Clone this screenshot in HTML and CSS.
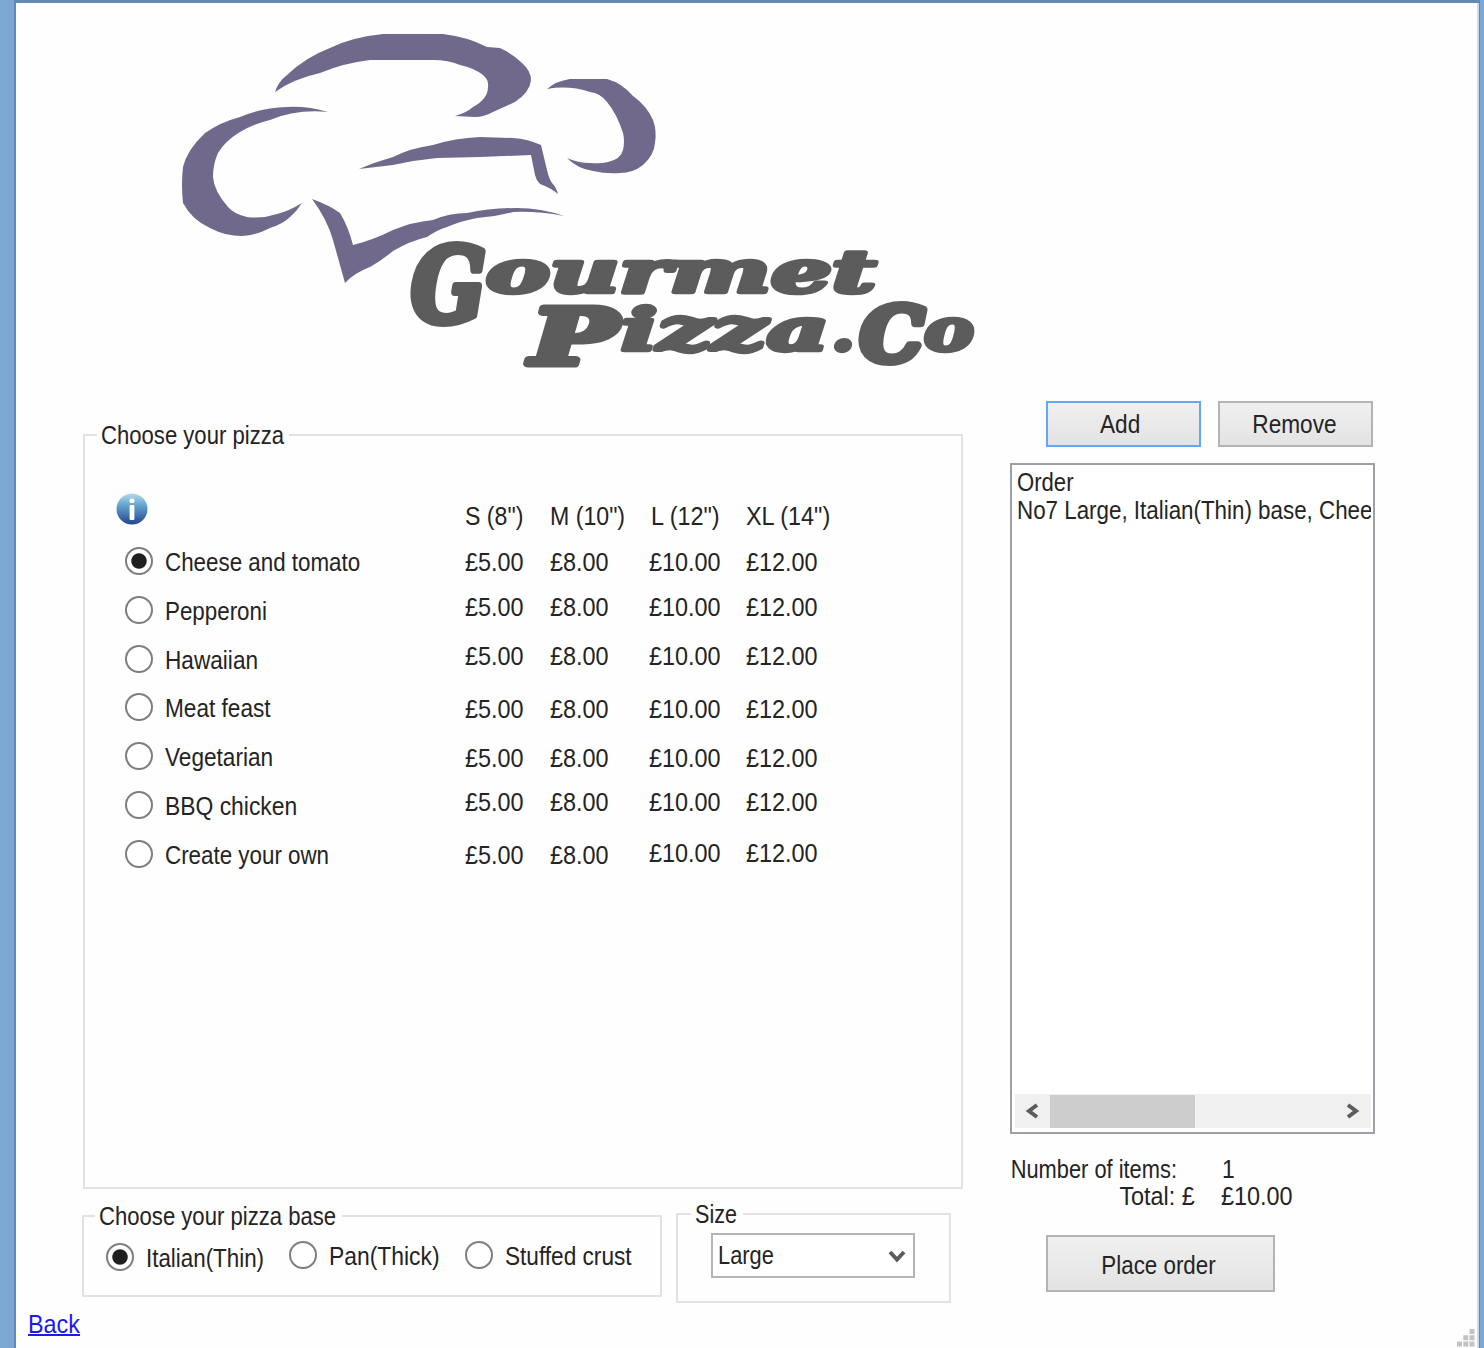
FILE: index.html
```html
<!DOCTYPE html>
<html lang="en">
<head>
<meta charset="utf-8">
<title>Gourmet Pizza.Co</title>
<link rel="stylesheet" href="styles.css">
</head>
<body>
<main class="window">
  <svg class="logo" viewBox="170 20 820 360" role="img" aria-label="Gourmet Pizza.Co">
    <g class="hat">
      <path d="M275 92Q278 82 287 75Q306 57 330 48Q352 37 383 34L443 34Q468 37 487 47L500 48Q513 54 522 63Q531 71 531 80Q530 92 515 102L493 112Q484 117 475 117L455 116Q466 113 473 107Q488 99 488 87Q489 80 483 75Q474 68 460 65Q448 60 433 60L370 60Q344 63 320 73Q293 79 275 92Z"/>
      <path d="M328 112Q308 106 287 107Q261 108 240 117Q221 122 205 133Q187 150 183 167Q181 185 183 203Q192 220 210 228Q225 236 242 236Q257 235 270 228Q283 224 290 217Q297 211 302 203Q289 211 277 214Q262 219 247 217Q234 214 228 207Q214 191 213 177Q213 164 218 153Q225 141 240 132Q253 124 270 120Q296 109 328 112Z"/>
      <path d="M547 89Q556 81 570 79L607 79Q622 83 633 96Q647 106 653 120Q657 131 655 143Q654 155 643 165Q633 173 620 173Q606 174 593 171Q578 169 567 158Q578 163 590 163Q601 164 608 162Q621 159 623 150Q625 141 623 133Q617 114 607 102Q600 93 590 92Q569 85 547 89Z"/>
      <path d="M359 169Q375 162 393 157Q411 148 433 145Q455 138 480 137L513 138Q528 139 541 145L547 170Q549 179 552 183Q556 187 558 194Q551 188 540 184Q536 180 535 175L531 155L480 157L437 158Q415 160 393 165Z"/>
      <path d="M312 199Q329 205 340 213Q348 226 353 245Q373 240 393 230Q412 222 433 220Q449 213 467 213Q491 208 517 208Q541 208 564 216Q538 211 513 212Q495 217 477 218Q461 221 447 227Q437 230 427 237Q410 241 393 251Q381 261 370 267Q354 273 345 283L333 240Q327 219 312 199Z"/>
    </g>
    <g class="brand">
      <text><tspan class="cap-g" x="411" y="322" textLength="75" lengthAdjust="spacingAndGlyphs">G</tspan><tspan class="low" x="486" y="292" textLength="390" lengthAdjust="spacingAndGlyphs">ourmet</tspan></text>
      <text><tspan class="cap-p" x="531" y="364" textLength="86" lengthAdjust="spacingAndGlyphs">P</tspan><tspan class="low" x="621" y="350" textLength="208" lengthAdjust="spacingAndGlyphs">izza</tspan><tspan class="low" x="831" y="350" textLength="24" lengthAdjust="spacingAndGlyphs">.</tspan><tspan class="cap-c" x="860" y="361" textLength="64" lengthAdjust="spacingAndGlyphs">C</tspan><tspan class="low" x="924" y="350" textLength="50" lengthAdjust="spacingAndGlyphs">o</tspan></text>
    </g>
  </svg>

  <div class="content">
    <section class="left">
      <fieldset class="group pizzas">
        <legend class="legend-pizza"><span class="t w85">Choose your pizza</span></legend>
        <div class="menu">
          <div class="choices">
            <svg class="info" viewBox="0 0 32 32" aria-label="Information">
              <defs><linearGradient id="orb" x1="0" y1="0" x2="0" y2="1"><stop offset="0" stop-color="#b5dbed"/><stop offset=".35" stop-color="#68a8d2"/><stop offset="1" stop-color="#23458f"/></linearGradient></defs>
              <circle cx="16" cy="16" r="15.5" fill="url(#orb)"/>
              <rect x="13.6" y="5.5" width="4.8" height="4.5" rx="1.5" fill="#fff"/>
              <rect x="13.6" y="12" width="4.8" height="15" rx="1" fill="#fff"/>
            </svg>
            <div class="choice"><i class="radio on"></i><span class="t w86">Cheese and tomato</span></div>
            <div class="choice"><i class="radio"></i><span class="t w86">Pepperoni</span></div>
            <div class="choice"><i class="radio"></i><span class="t w87">Hawaiian</span></div>
            <div class="choice"><i class="radio"></i><span class="t w87">Meat feast</span></div>
            <div class="choice"><i class="radio"></i><span class="t w87">Vegetarian</span></div>
            <div class="choice"><i class="radio"></i><span class="t w88">BBQ chicken</span></div>
            <div class="choice"><i class="radio"></i><span class="t w86">Create your own</span></div>
          </div>
          <div class="prices small"><span class="t w89">S (8")</span><span class="t w90">£5.00</span><span class="t w90">£5.00</span><span class="t w90">£5.00</span><span class="t w90">£5.00</span><span class="t w90">£5.00</span><span class="t w90">£5.00</span><span class="t w90">£5.00</span></div>
          <div class="prices medium"><span class="t w89">M (10")</span><span class="t w90">£8.00</span><span class="t w90">£8.00</span><span class="t w90">£8.00</span><span class="t w90">£8.00</span><span class="t w90">£8.00</span><span class="t w90">£8.00</span><span class="t w90">£8.00</span></div>
          <div class="prices large"><span class="t w90">L (12")</span><span class="t w90">£10.00</span><span class="t w90">£10.00</span><span class="t w90">£10.00</span><span class="t w90">£10.00</span><span class="t w90">£10.00</span><span class="t w90">£10.00</span><span class="t w90">£10.00</span></div>
          <div class="prices xlarge"><span class="t w90">XL (14")</span><span class="t w90">£12.00</span><span class="t w90">£12.00</span><span class="t w90">£12.00</span><span class="t w90">£12.00</span><span class="t w90">£12.00</span><span class="t w90">£12.00</span><span class="t w90">£12.00</span></div>
        </div>
      </fieldset>

      <div class="options">
        <fieldset class="group bases">
          <legend class="legend-base"><span class="t w85">Choose your pizza base</span></legend>
          <div class="base-row">
            <div class="base thin"><i class="radio on"></i><span class="t w86">Italian(Thin)</span></div>
            <div class="base thick"><i class="radio"></i><span class="t w88">Pan(Thick)</span></div>
            <div class="base stuffed"><i class="radio"></i><span class="t w87">Stuffed crust</span></div>
          </div>
        </fieldset>
        <fieldset class="group size">
          <legend class="legend-size"><span class="t w83">Size</span></legend>
          <div class="select"><span class="t w84">Large</span>
            <svg class="chevron" viewBox="0 0 18 14"><path d="M2 2L9 9.5L16 2" /></svg>
          </div>
        </fieldset>
      </div>
      <a class="back" href="#"><span class="t w90">Back</span></a>
    </section>

    <aside class="right">
      <div class="actions">
        <button class="btn focus"><span class="t mid w87">Add</span></button>
        <button class="btn"><span class="t mid w87">Remove</span></button>
      </div>
      <div class="listbox">
        <div class="items">
          <div class="item"><span class="t w85">Order</span></div>
          <div class="item"><span class="t w86">No7 Large, Italian(Thin) base, Cheese and tomato</span></div>
        </div>
        <div class="scrollbar">
          <svg class="arrow" viewBox="0 0 14 16"><path d="M12 2L4 8L12 14"/></svg>
          <div class="thumb"></div>
          <svg class="arrow" viewBox="0 0 14 16"><path d="M2 2L10 8L2 14"/></svg>
        </div>
      </div>
      <dl class="summary">
        <dt><span class="t end w84">Number of items:</span></dt><dd class="count"><span class="t w88">1</span></dd>
        <dt class="total"><span class="t end w90">Total: £</span></dt><dd><span class="t w90">£10.00</span></dd>
      </dl>
      <button class="btn place"><span class="t mid w86">Place order</span></button>
    </aside>
  </div>
  <svg class="grip" viewBox="0 0 18 18"><path d="M12.500 0h5v5h-5zM6.300 6.300h5v5h-5zM12.500 6.300h5v5h-5zM0 12.500h5v5h-5zM6.300 12.500h5v5h-5zM12.500 12.500h5v5h-5z"/></svg>
</main>
</body>
</html>
```
FILE: styles.css
```css
* { box-sizing: border-box; }
html { background: #7ba7d5; }
body {
  margin: 0;
  width: 1484px;
  height: 1348px;
  padding: 0 4px 0 14px;
  overflow: hidden;
  background: #7ba7d5;
  font: 26px/30px "Liberation Sans", Arial, sans-serif;
  color: #242424;
}
.window {
  position: relative;
  height: 1348px;
  background: #fefefe;
  border: solid #6489b5;
  border-width: 3px 1px 0 2px;
  box-shadow: inset -2px 0 #cfdbe5;
}

/* Narrow dialog type: each label is condensed horizontally. */
.t {
  display: inline-block;
  white-space: nowrap;
  transform: scaleX(var(--w));
  transform-origin: 0 0;
}
.mid { transform-origin: 50% 0; }
.end { transform-origin: 100% 0; }
.w83 { --w: .83; } .w84 { --w: .84; } .w85 { --w: .85; } .w86 { --w: .86; }
.w87 { --w: .87; } .w88 { --w: .88; } .w89 { --w: .89; } .w90 { --w: .9; }

.logo { display: block; width: 820px; height: 360px; margin: 17px 0 0 154px; }
.hat { fill: #70698c; }
.brand {
  font-family: "DejaVu Serif", serif;
  font-weight: bold;
  font-style: italic;
  fill: #5c5c5c;
  stroke: #5c5c5c;
  stroke-width: 4.500;
  stroke-linejoin: round;
}
.low { font-size: 58px; }
.cap-g { font-size: 103px; stroke-width: 8; }
.cap-p { font-size: 76px; stroke-width: 7; }
.cap-c { font-size: 75px; stroke-width: 8; }

.content { display: flex; gap: 47px; padding-left: 66px; }
.left { width: 881px; padding-top: 40px; }
.right { width: 366px; padding-top: 21px; }

.group { margin: 0; padding: 0; border: 2px solid #e2e2e2; min-width: 0; }
.group legend { height: 30px; padding: 0 0 0 4px; }
.pizzas { height: 769px; margin-left: 1px; }
.legend-pizza { width: 192px; margin-left: 12px; }
.menu { display: flex; padding: 43px 0 0 31px; }
.choices { width: 349px; }
.info { display: block; width: 32px; height: 32px; margin-bottom: 22px; }
.choice { display: flex; height: 48.8px; padding-left: 9px; }
.radio {
  flex: none;
  width: 28px;
  height: 28px;
  margin: 0 12px 0 0;
  border: 2px solid #7e7e7e;
  border-radius: 50%;
  background: #fff;
}
.radio.on { background: radial-gradient(circle, #202020 0 7.2px, #fff 8.2px); }
.prices {
  display: grid;
  grid-template-rows: 46px 45px 49px 53px 49px 44px 53px 30px;
  padding-top: 8px;
}
.small { width: 85px; }
.medium { width: 99px; }
.large { width: 97px; }
.xlarge { width: 100px; }
.large > :first-child { margin-left: 2px; }
.large > :last-child, .xlarge > :last-child { margin-top: -2px; }

.options { display: flex; gap: 14px; padding-top: 10px; }
.bases { width: 580px; height: 96px; margin-top: 2px; }
.legend-base { width: 247px; margin-left: 11px; }
.base-row { display: flex; padding: 10px 0 0 22px; }
.base { display: flex; height: 30px; }
.thin { width: 183px; padding-top: 2px; height: 32px; }
.thick { width: 176px; }
.size { width: 275px; height: 104px; }
.legend-size { width: 52px; margin-left: 13px; }
.select {
  display: flex;
  justify-content: space-between;
  align-items: center;
  width: 204px;
  height: 45px;
  margin: 4px 0 0 33px;
  padding: 0 7px 2px 5px;
  border: 2px solid #b4b4bb;
  background: #fff;
}
.chevron { width: 18px; height: 14px; margin-top: 5px; }
.chevron path, .arrow path { fill: none; stroke: #5c5c5c; stroke-width: 4; }
.back { display: block; width: 60px; margin: 6px 0 0 -54px; color: #1a1aee; }
.back .t { text-decoration: underline; text-decoration-thickness: 2px; }

.btn {
  width: 155px;
  height: 46px;
  padding: 0 6px 0 0;
  border: 2px solid #b4b4b4;
  background: linear-gradient(#f0f0f0, #e3e3e3);
  font: inherit;
  color: inherit;
}
.btn:nth-child(2) { padding-right: 3px; }
.btn.focus { border-color: #61a9f3; }
.actions { display: flex; gap: 17px; padding-left: 36px; }
.listbox {
  display: flex;
  flex-direction: column;
  width: 365px;
  height: 671px;
  margin-top: 16px;
  padding: 2px 2px 4px 3px;
  border: 2px solid #9ea0a7;
  background: #fff;
}
.items { flex: 1; overflow: hidden; padding-left: 2px; }
.item { height: 27.500px; }
.scrollbar { display: flex; align-items: center; height: 34px; padding: 0 11px 0 10px; background: #f0f0f0; }
.scrollbar .arrow { width: 14px; height: 16px; }
.thumb { width: 145px; height: 33px; margin: 0 auto 0 11px; background: #cdcdcd; }
.summary {
  display: grid;
  grid-template-columns: 167px 1fr;
  grid-auto-rows: 27px;
  column-gap: 44px;
  margin: 22px 0 0;
  line-height: 27px;
}
.summary dt { display: flex; justify-content: flex-end; }
.summary dd { margin: 0; }
.count { padding-left: 1px; }
.total { margin-right: -18px; }
.place { width: 229px; height: 57px; margin: 25px 0 0 36px; padding: 2px 4px 0 0; }
.grip { position: absolute; right: 4px; bottom: 1px; width: 18px; height: 18px; fill: #c2c2c2; }
```
